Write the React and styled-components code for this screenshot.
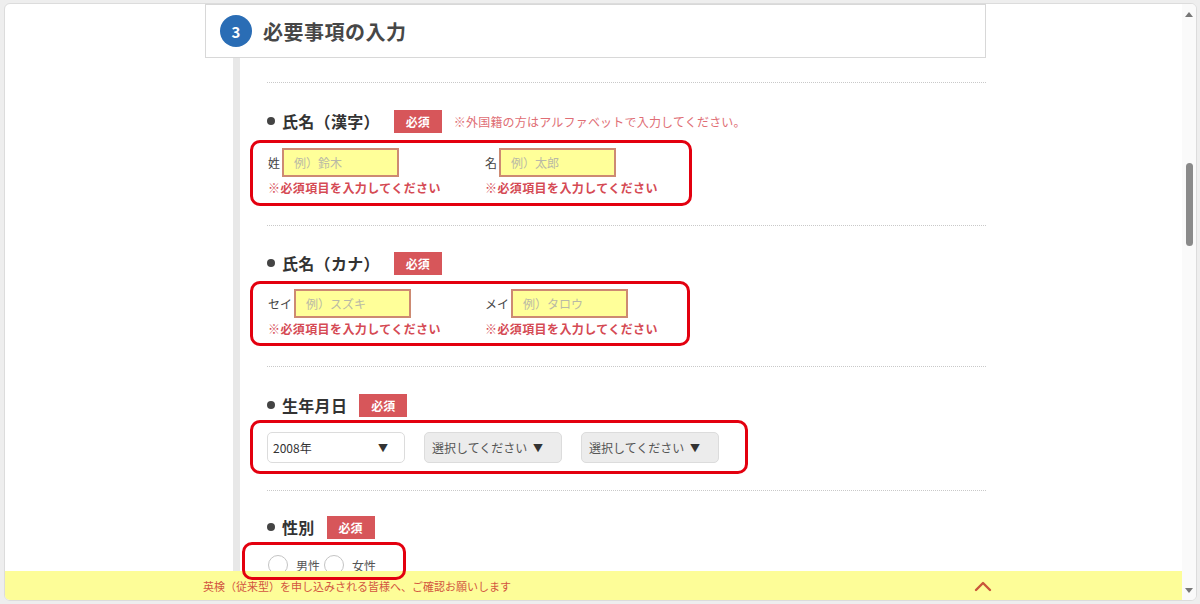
import React from 'react'
import styled, { createGlobalStyle } from 'styled-components'

const GlobalStyle = createGlobalStyle`
  html, body {
    margin: 0;
    padding: 0;
    background: #eeeeee;
    font-family: "Noto Sans CJK JP", "Noto Sans", sans-serif;
    color: #333;
  }
  * { box-sizing: border-box; }
`

const Window = styled.div`
  margin: 3px 0 0 4px;
  width: 1193px;
  height: 598px;
  border: 1px solid #dcdcdc;
  border-radius: 6px;
  background: #fff;
  display: flex;
  overflow: hidden;
  position: relative;
`

const Main = styled.div`
  flex: 1;
  padding-left: 200px;
  overflow: hidden;
`

const Header = styled.div`
  width: 781px;
  height: 54px;
  border: 1px solid #d8d8d8;
  display: flex;
  align-items: center;
  gap: 11px;
  padding-left: 14px;
`

const StepCircle = styled.div`
  width: 32px;
  height: 32px;
  border-radius: 50%;
  background: #2a6db5;
  color: #fff;
  font-size: 15px;
  font-weight: 700;
  display: flex;
  align-items: center;
  justify-content: center;
`

const HeaderTitle = styled.h2`
  margin: 0;
  font-size: 20px;
  font-weight: 700;
  color: #474747;
  letter-spacing: 0.5px;
`

const Body = styled.div`
  margin-left: 28px;
  width: 753px;
  border-left: 7px solid #e8e8e8;
  padding-left: 27px;
  padding-top: 24px;
  min-height: 560px;
`

const Separator = styled.div`
  border-top: 1px dotted #c9c9c9;
`

const Section = styled.div`
  padding-top: ${p => p.$pt}px;
  padding-bottom: ${p => p.$pb}px;
`

const TitleRow = styled.div`
  display: flex;
  align-items: center;
  height: 24px;
  gap: 12px;
`

const Title = styled.h3`
  margin: 0;
  font-size: 16px;
  font-weight: 700;
  color: #333;
  display: flex;
  align-items: center;
  letter-spacing: 0.3px;

  &::before {
    content: '';
    width: 8px;
    height: 8px;
    border-radius: 50%;
    background: #444;
    margin-right: 7px;
  }
`

const Badge = styled.span`
  width: 48px;
  height: 23px;
  margin-left: ${p => p.$ml || 0}px;
  background: #d7565a;
  color: #fff;
  font-size: 12px;
  font-weight: 700;
  display: flex;
  align-items: center;
  justify-content: center;
`

const Note = styled.span`
  font-size: 12px;
  color: #e06e75;
  letter-spacing: 0.2px;
`

const RedBox = styled.div`
  position: relative;
  margin-top: ${p => p.$mt}px;
  margin-left: ${p => p.$ml}px;
  width: ${p => p.$w}px;
  padding: ${p => p.$pad};
  display: flex;
  gap: ${p => p.$gap || 0}px;

  &::after {
    content: '';
    position: absolute;
    inset: 0;
    border: 3px solid #e3000f;
    border-radius: 10px;
    z-index: 5;
    pointer-events: none;
  }
`

const FieldGroup = styled.div`
  width: 217px;
  flex-shrink: 0;
  display: flex;
  flex-direction: column;
  gap: 4px;
`

const InputRow = styled.div`
  display: flex;
  align-items: center;
  gap: 2px;
  font-size: 12px;
  color: #444;
`

const TextInput = styled.input`
  width: 117px;
  height: 29px;
  background: #ffff99;
  border: 2px solid #cd8a72;
  padding: 0 10px;
  font-size: 12px;
  font-family: inherit;
  outline: none;

  &::placeholder {
    color: #b9b9a6;
  }
`

const ErrorText = styled.div`
  font-size: 12px;
  font-weight: 700;
  color: #d54a54;
  line-height: 14px;
  letter-spacing: 0.4px;
  white-space: nowrap;
`

const SelectBox = styled.div`
  width: 138px;
  height: 31px;
  flex-shrink: 0;
  border: 1px solid #dcdcdc;
  border-radius: 5px;
  background: ${p => (p.$filled ? '#fff' : '#ececec')};
  display: flex;
  align-items: center;
  justify-content: space-between;
  padding: 0 ${p => (p.$filled ? '16px' : '18px')} 0 ${p => (p.$filled ? '5px' : '7px')};
  font-size: 12px;
  color: ${p => (p.$filled ? '#333' : '#555')};
`

const Arrow = styled.span`
  font-size: 10px;
  color: #333;
`

const RadioItem = styled.label`
  display: flex;
  align-items: center;
  gap: 8px;
  font-size: 12px;
  color: #555;
  margin-right: 4px;
`

const RadioCircle = styled.span`
  width: 20px;
  height: 20px;
  border-radius: 50%;
  border: 1px solid #c4c4c4;
  background: #fff;
`

const NoticeBar = styled.div`
  position: absolute;
  left: 0;
  right: 14px;
  bottom: 0;
  height: 29px;
  background: #fdfd98;
  z-index: 4;
  display: flex;
  align-items: center;
  padding-left: 198px;
  font-size: 11px;
  color: #d2553f;
`

const Chevron = styled.svg`
  position: absolute;
  left: 966px;
  top: 8px;
`

const Scrollbar = styled.div`
  width: 14px;
  background: #fafafa;
  position: relative;
  display: flex;
  flex-direction: column;
  align-items: center;
  justify-content: space-between;
  padding: 8px 0 7px;
`

const ScrollArrow = styled.span`
  width: 0;
  height: 0;
  border-left: 4px solid transparent;
  border-right: 4px solid transparent;
  ${p => (p.$down ? 'border-top: 5px solid #777;' : 'border-bottom: 5px solid #777;')}
`

const Thumb = styled.div`
  position: absolute;
  top: 159px;
  left: 4px;
  width: 7px;
  height: 83px;
  border-radius: 4px;
  background: #8a8a8a;
`

const NameFields = ({ items }) => (
  <>
    {items.map(it => (
      <FieldGroup key={it.label}>
        <InputRow>
          {it.label}
          <TextInput placeholder={it.placeholder} />
        </InputRow>
        <ErrorText>※必須項目を入力してください</ErrorText>
      </FieldGroup>
    ))}
  </>
)

export default function App() {
  return (
    <>
      <GlobalStyle />
      <Window>
        <Main>
          <Header>
            <StepCircle>3</StepCircle>
            <HeaderTitle>必要事項の入力</HeaderTitle>
          </Header>
          <Body>
            <Separator />
            <Section $pt={26} $pb={19}>
              <TitleRow>
                <Title>氏名（漢字）</Title>
                <Badge $ml={2}>必須</Badge>
                <Note>※外国籍の方はアルファベットで入力してください。</Note>
              </TitleRow>
              <RedBox $mt={7} $ml={-17} $w={442} $pad="8px 0 11px 18px">
                <NameFields
                  items={[
                    { label: '姓', placeholder: '例）鈴木' },
                    { label: '名', placeholder: '例）太郎' },
                  ]}
                />
              </RedBox>
            </Section>
            <Separator />
            <Section $pt={25} $pb={20}>
              <TitleRow>
                <Title>氏名（カナ）</Title>
                <Badge $ml={2}>必須</Badge>
              </TitleRow>
              <RedBox $mt={6} $ml={-17} $w={440} $pad="8px 0 10px 18px">
                <NameFields
                  items={[
                    { label: 'セイ', placeholder: '例）スズキ' },
                    { label: 'メイ', placeholder: '例）タロウ' },
                  ]}
                />
              </RedBox>
            </Section>
            <Separator />
            <Section $pt={26} $pb={16}>
              <TitleRow>
                <Title>生年月日</Title>
                <Badge>必須</Badge>
              </TitleRow>
              <RedBox $mt={3} $ml={-17} $w={498} $pad="12px 0 11px 17px" $gap={19}>
                <SelectBox $filled>
                  2008年<Arrow>▼</Arrow>
                </SelectBox>
                <SelectBox>
                  選択してください<Arrow>▼</Arrow>
                </SelectBox>
                <SelectBox>
                  選択してください<Arrow>▼</Arrow>
                </SelectBox>
              </RedBox>
            </Section>
            <Separator />
            <Section $pt={24} $pb={20}>
              <TitleRow>
                <Title>性別</Title>
                <Badge>必須</Badge>
              </TitleRow>
              <RedBox $mt={3} $ml={-25} $w={164} $pad="13px 0 5px 26px">
                <RadioItem>
                  <RadioCircle />
                  男性
                </RadioItem>
                <RadioItem>
                  <RadioCircle />
                  女性
                </RadioItem>
              </RedBox>
            </Section>
          </Body>
          <NoticeBar>
            英検（従来型）を申し込みされる皆様へ、ご確認お願いします
            <Chevron width="24" height="14" viewBox="0 0 24 14">
              <path d="M5 11 L12 4 L19 11" fill="none" stroke="#c9553a" strokeWidth="2.4" strokeLinecap="round" strokeLinejoin="round" />
            </Chevron>
          </NoticeBar>
        </Main>
        <Scrollbar>
          <ScrollArrow />
          <Thumb />
          <ScrollArrow $down />
        </Scrollbar>
      </Window>
    </>
  )
}
